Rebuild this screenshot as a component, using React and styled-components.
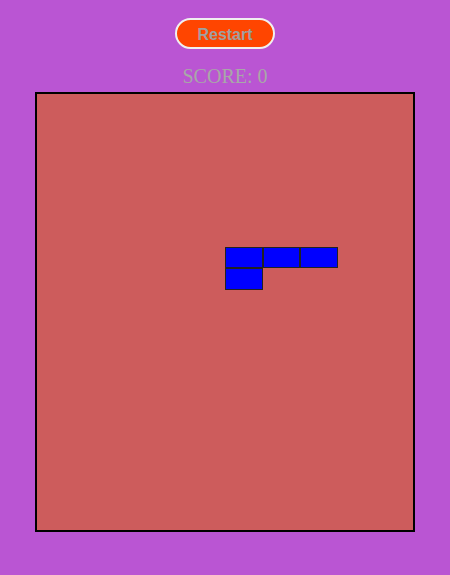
import React from "react";
import styled, { createGlobalStyle } from "styled-components";

const Global = createGlobalStyle`
  html, body { margin: 0; padding: 0; background: #ba55d3; }
  body { font-family: "Liberation Serif", serif; }
`;

const Page = styled.div`
  display: flex;
  flex-direction: column;
  align-items: center;
  padding-top: 18px;
  height: 575px;
  box-sizing: border-box;
`;

const RestartButton = styled.button`
  width: 100px;
  height: 31px;
  box-sizing: border-box;
  background: #ff4500;
  border: 2px solid #f0f0f0;
  border-radius: 16px;
  color: #a0a0a0;
  font-family: "Liberation Sans", Arial, sans-serif;
  font-weight: bold;
  font-size: 16px;
  padding: 3px 0 0;
  cursor: pointer;
`;

const Score = styled.div`
  margin-top: 16px;
  height: 22px;
  line-height: 22px;
  font-family: "Liberation Serif", serif;
  font-size: 20px;
  color: #a8a8a8;
`;

const Board = styled.div`
  margin-top: 5px;
  width: 380px;
  height: 440px;
  box-sizing: border-box;
  border: 2px solid #000;
  background: #cd5c5c;
  display: grid;
  grid-template-columns: repeat(10, 1fr);
  grid-template-rows: repeat(20, 1fr);
`;

const Cell = styled.div`
  box-sizing: border-box;
  background: ${(p) => (p.$filled ? "#0000ff" : "transparent")};
  border: ${(p) => (p.$filled ? "1px solid #222" : "none")};
`;

const filled = new Set(["7-5", "7-6", "7-7", "8-5"]);

export default function App() {
  const cells = [];
  for (let r = 0; r < 20; r++) {
    for (let c = 0; c < 10; c++) {
      cells.push(<Cell key={`${r}-${c}`} $filled={filled.has(`${r}-${c}`)} />);
    }
  }
  return (
    <>
      <Global />
      <Page>
        <RestartButton>Restart</RestartButton>
        <Score>SCORE: 0</Score>
        <Board>{cells}</Board>
      </Page>
    </>
  );
}
